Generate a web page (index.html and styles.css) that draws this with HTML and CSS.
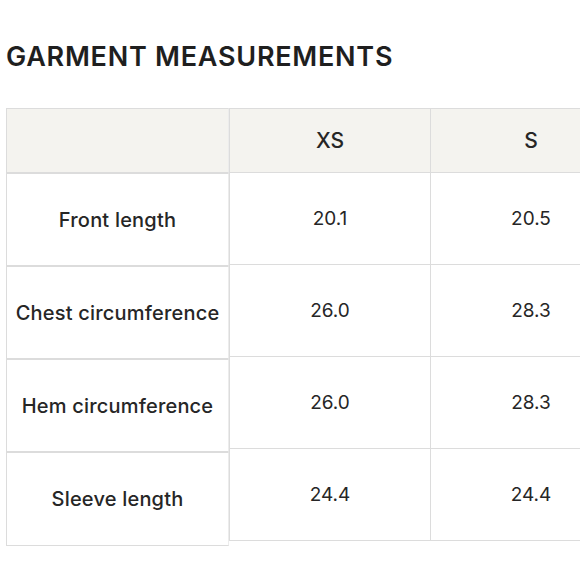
FILE: index.html
```html
<!DOCTYPE html>
<html>
<head>
<meta charset="utf-8">
<link rel="stylesheet" href="styles.css">
</head>
<body>
<h1 class="title">GARMENT MEASUREMENTS</h1>
<div class="chart">
  <div class="label-col">
    <div class="label-cell head"></div>
    <div class="label-cell">Front length</div>
    <div class="label-cell">Chest circumference</div>
    <div class="label-cell">Hem circumference</div>
    <div class="label-cell">Sleeve length</div>
  </div>
  <div class="scroll">
    <table class="values">
      <thead>
        <tr><th>XS</th><th>S</th></tr>
      </thead>
      <tbody>
        <tr><td>20.1</td><td>20.5</td></tr>
        <tr><td>26.0</td><td>28.3</td></tr>
        <tr><td>26.0</td><td>28.3</td></tr>
        <tr><td>24.4</td><td>24.4</td></tr>
      </tbody>
    </table>
  </div>
</div>
</body>
</html>
```
FILE: styles.css
```css
html, body {
  margin: 0;
  padding: 0;
  background: #fff;
}
html {
  overflow: hidden;
}
body {
  padding-left: 6px;
  font-family: Inter, "Noto Sans", sans-serif;
  color: #222;
  width: 574px;
}
.title {
  margin: 0;
  padding-top: 42px;
  height: 108px;
  box-sizing: border-box;
  font-size: 27px;
  line-height: 30px;
  font-weight: 600;
  letter-spacing: 0.75px;
  color: #1f1f1f;
}
.chart {
  display: flex;
  align-items: flex-start;
  width: 574px;
}
.label-col {
  flex: 0 0 223px;
  display: flex;
  flex-direction: column;
}
.label-cell {
  box-sizing: border-box;
  height: 93px;
  border: 1px solid #dcdcdc;
  border-right-color: #ececec;
  display: flex;
  align-items: center;
  justify-content: center;
  font-size: 20px;
  letter-spacing: 0.2px;
  font-weight: 500;
  color: #262626;
}
.label-cell.head {
  height: 65px;
  background: #f4f3ef;
}
.label-cell:last-child {
  height: 94px;
}
.scroll {
  flex: 1 1 auto;
  min-width: 0;
  overflow: hidden;
}
.values {
  border-collapse: collapse;
  width: 402px;
  table-layout: fixed;
}
.values th, .values td {
  width: 200px;
  border: 1px solid #dcdcdc;
  text-align: center;
  padding: 0;
  font-size: 19px;
  color: #262626;
}
.values th {
  height: 63px;
  background: #f4f3ef;
  font-size: 21px;
  font-weight: 500;
}
.values td {
  height: 91px;
  font-weight: 400;
}
```
